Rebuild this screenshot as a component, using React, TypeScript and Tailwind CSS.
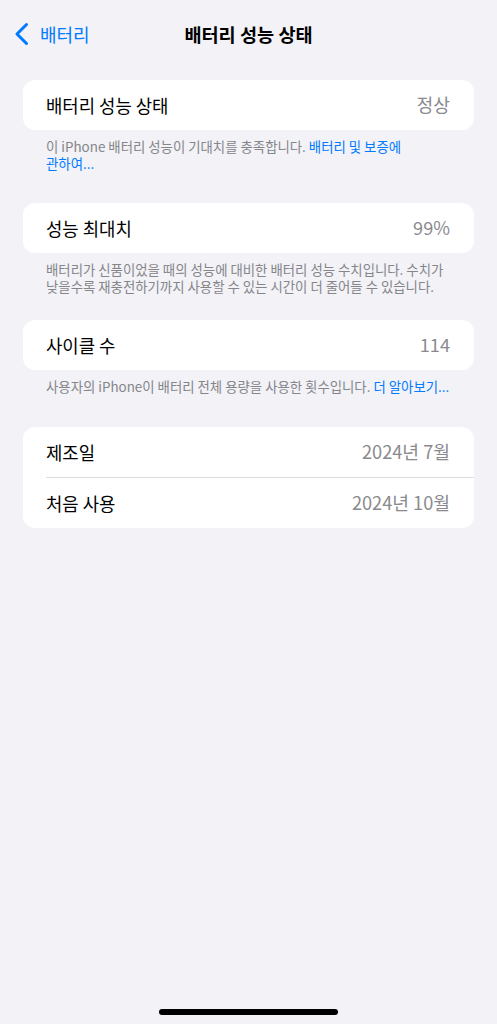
import React from 'react';

const font = { fontFamily: '"Noto Sans CJK KR", "Noto Sans", sans-serif' };

type Row = { label: string; value: string };

const Group = ({ rows }: { rows: Row[] }) => (
  <div className="mx-[23px] bg-white rounded-[12px] overflow-hidden">
    {rows.map((r, i) => (
      <div key={r.label} className="flex flex-col">
        {i > 0 && <div className="ml-[23px] h-px bg-[#dcdce0]" />}
        <div className="flex items-center justify-between h-[50px] pl-[23px] pr-[24px]">
          <span className="text-[17.8px] text-black">{r.label}</span>
          <span className="text-[18.2px] text-[#8a8a8e]">{r.value}</span>
        </div>
      </div>
    ))}
  </div>
);

const Footer = ({ children }: { children: React.ReactNode }) => (
  <p className="ml-[46px] mt-[8px] text-[13.4px] leading-[17px] text-[#85858a] whitespace-nowrap">
    {children}
  </p>
);

export default function App() {
  return (
    <div className="relative w-[497px] h-[1024px] bg-[#f2f2f7] overflow-hidden" style={font}>
      {/* nav bar */}
      <div className="relative flex items-center h-[44px] mt-[12px]">
        <div className="flex items-center pl-[14px] gap-[10px] text-[#007aff]">
          <svg width="16" height="24" viewBox="0 0 16 24" fill="none">
            <path d="M12.5 2.5 L3 12 L12.5 21.5" stroke="#007aff" strokeWidth="3" strokeLinecap="round" strokeLinejoin="round" />
          </svg>
          <span className="text-[18px]">배터리</span>
        </div>
        <div className="absolute left-0 right-0 text-center text-[18.6px] font-bold text-black pointer-events-none">
          배터리 성능 상태
        </div>
      </div>

      <div className="flex flex-col pt-[24px]">
        <Group rows={[{ label: '배터리 성능 상태', value: '정상' }]} />
        <Footer>
          이 iPhone 배터리 성능이 기대치를 충족합니다.{' '}
          <span className="text-[#007aff]">배터리 및 보증에</span>
          <br />
          <span className="text-[#007aff]">관하여...</span>
        </Footer>

        <div className="h-[31px]" />
        <Group rows={[{ label: '성능 최대치', value: '99%' }]} />
        <Footer>
          배터리가 신품이었을 때의 성능에 대비한 배터리 성능 수치입니다. 수치가
          <br />
          낮을수록 재충전하기까지 사용할 수 있는 시간이 더 줄어들 수 있습니다.
        </Footer>

        <div className="h-[25px]" />
        <Group rows={[{ label: '사이클 수', value: '114' }]} />
        <Footer>
          사용자의 iPhone이 배터리 전체 용량을 사용한 횟수입니다.{' '}
          <span className="text-[#007aff]">더 알아보기...</span>
        </Footer>

        <div className="h-[32px]" />
        <Group
          rows={[
            { label: '제조일', value: '2024년 7월' },
            { label: '처음 사용', value: '2024년 10월' },
          ]}
        />
      </div>

      {/* home indicator */}
      <div className="absolute left-[159px] bottom-[9px] w-[179px] h-[6px] rounded-full bg-black" />
    </div>
  );
}
